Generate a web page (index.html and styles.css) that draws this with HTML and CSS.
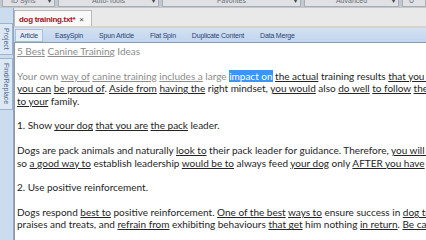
FILE: index.html
```html
<!DOCTYPE html>
<html lang="en">
<head>
    <meta charset="UTF-8">
    <title>dog training.txt</title>
    <link rel="stylesheet" href="styles.css">
</head>
<body>
    <div class="app">
        <div class="menu-strip">
            <div class="combo combo-id"><span>ID Syns</span><i class="arrow">▾</i></div>
            <div class="combo combo-auto"><span>Auto-Tools</span><i class="arrow">▾</i></div>
            <div class="combo combo-fav"><span>Favorites</span><i class="arrow">▾</i></div>
            <div class="combo combo-adv"><span>Advanced</span><i class="arrow">▾</i></div>
            <div class="combo combo-last"><span>U</span></div>
        </div>

        <div class="main">
            <aside class="side">
                <div class="side-tab tab-project">Project</div>
                <div class="side-tab tab-find">Find/Replace</div>
            </aside>

            <div class="workspace">
                <div class="doc-tabs">
                    <div class="doc-tab">dog training.txt* <span class="close">×</span></div>
                </div>

                <div class="toolbar">
                    <div class="tool active">Article</div>
                    <div class="tool">EasySpin</div>
                    <div class="tool">Spun Article</div>
                    <div class="tool">Flat Spin</div>
                    <div class="tool">Duplicate Content</div>
                    <div class="tool">Data Merge</div>
                </div>

                <div class="editor">
                    <div class="line faded"><u>5 Best</u> <u>Canine Training</u> Ideas</div>
                    <div class="line"></div>
                    <div class="line"><span class="faded">Your own <u>way of</u> <u>canine training</u> <u>includes a</u> large </span><span class="sel">impact on</span> <u>the actual</u> training results <u>that you would</u></div>
                    <div class="line"><u>you can</u> <u>be proud of</u>. <u>Aside from</u> <u>having the</u> right mindset, <u>you would</u> also <u>do well</u> <u>to follow</u> <u>the advice</u></div>
                    <div class="line"><u>to your</u> family.</div>
                    <div class="line"></div>
                    <div class="line">1. Show <u>your dog</u> <u>that you are</u> <u>the pack</u> leader.</div>
                    <div class="line"></div>
                    <div class="line">Dogs are pack animals and naturally <u>look to</u> their pack leader for guidance. Therefore, <u>you will have</u></div>
                    <div class="line">so <u>a good way to</u> establish leadership <u>would be to</u> always feed <u>your dog</u> only <u>AFTER you have</u> eaten</div>
                    <div class="line"></div>
                    <div class="line">2. Use positive reinforcement.</div>
                    <div class="line"></div>
                    <div class="line">Dogs respond <u>best to</u> positive reinforcement. <u>One of the best</u> <u>ways to</u> ensure success in <u>dog training</u></div>
                    <div class="line">praises and treats, and <u>refrain from</u> exhibiting behaviours <u>that get</u> him nothing <u>in return</u>. <u>Be careful</u></div>
                </div>
            </div>
        </div>
    </div>
</body>
</html>
```

FILE: styles.css
```css
* {
    margin: 0;
    padding: 0;
    box-sizing: border-box;
}

body {
    width: 426px;
    height: 240px;
    overflow: hidden;
    background: #ffffff;
    font-family: "Liberation Sans", Arial, sans-serif;
}

.app {
    display: flex;
    flex-direction: column;
    height: 240px;
}

/* top combo row, only its lower half shows */
.menu-strip {
    display: flex;
    gap: 3px;
    height: 8px;
    padding-left: 2px;
    background: #c3c7ce;
    overflow: hidden;
}

.combo {
    display: flex;
    justify-content: center;
    align-items: center;
    position: relative;
    height: 13px;
    margin-top: -6px;
    background: #dfe1e5;
    border: 1px solid #a9adb5;
    color: #6a6d72;
    font-size: 7px;
}

.combo .arrow {
    position: absolute;
    right: 3px;
    font-style: normal;
    font-size: 6px;
    color: #444;
}

.combo-id { width: 53px; justify-content: flex-start; padding-left: 8px; }
.combo-auto { width: 101px; }
.combo-fav { width: 139px; }
.combo-adv { width: 95px; }
.combo-last { flex: 1; justify-content: flex-start; padding-left: 6px; }

.main {
    display: flex;
    flex: 1;
    min-height: 0;
}

.side {
    width: 14px;
    flex-shrink: 0;
    background: #cbdcef;
    border-right: 1px solid #8fa6c4;
    padding-top: 15px;
    display: flex;
    flex-direction: column;
    gap: 3px;
}

.side-tab {
    writing-mode: vertical-rl;
    width: 13px;
    background: #dde8f5;
    border: 1px solid #9db3d0;
    border-left: none;
    color: #4a6690;
    font-size: 7px;
    display: flex;
    align-items: center;
    justify-content: center;
}

.tab-project { height: 32px; }
.tab-find { height: 52px; }

.workspace {
    flex: 1;
    display: flex;
    flex-direction: column;
    min-width: 0;
}

.doc-tabs {
    height: 20px;
    background: #e9e9e9;
    border-bottom: 2px solid #d3d3d3;
    padding-top: 2px;
    display: flex;
}

.doc-tab {
    width: 78px;
    background: #f9f9f9;
    border: 1px solid #b9b9b9;
    border-bottom: none;
    color: #a5121d;
    font-size: 8px;
    font-weight: bold;
    letter-spacing: -0.3px;
    padding: 4px 0 0 4px;
}

.doc-tab .close {
    color: #333;
    font-weight: normal;
    font-size: 8px;
    margin-left: 2px;
}

.toolbar {
    height: 15px;
    background: linear-gradient(#d3e1f3, #c2d5ee);
    border-bottom: 1px solid #8f9aa8;
    display: flex;
    align-items: center;
    padding-left: 1px;
}

.tool {
    height: 13px;
    line-height: 12px;
    padding: 0 7px;
    color: #2b4670;
    font-size: 7px;
    letter-spacing: -0.2px;
    border: 1px solid transparent;
}

.tool.active {
    padding: 0 4px;
    background: #e4edf8;
    border-color: #a8bfdd;
    margin-right: 4px;
}

.editor {
    flex: 1;
    border-left: 1px solid #9a9a9a;
    padding: 2px 0 0 2px;
    font-family: Lato, "Liberation Sans", sans-serif;
    font-size: 10px;
    line-height: 12.4px;
    color: #252525;
    white-space: nowrap;
    overflow: hidden;
}

.line {
    height: 12.4px;
}

.editor u {
    text-decoration-thickness: 1px;
    text-underline-offset: 1px;
}

.faded {
    color: #8c8c8c;
}

.sel {
    background: #3b95f2;
    color: #ffffff;
}
```
